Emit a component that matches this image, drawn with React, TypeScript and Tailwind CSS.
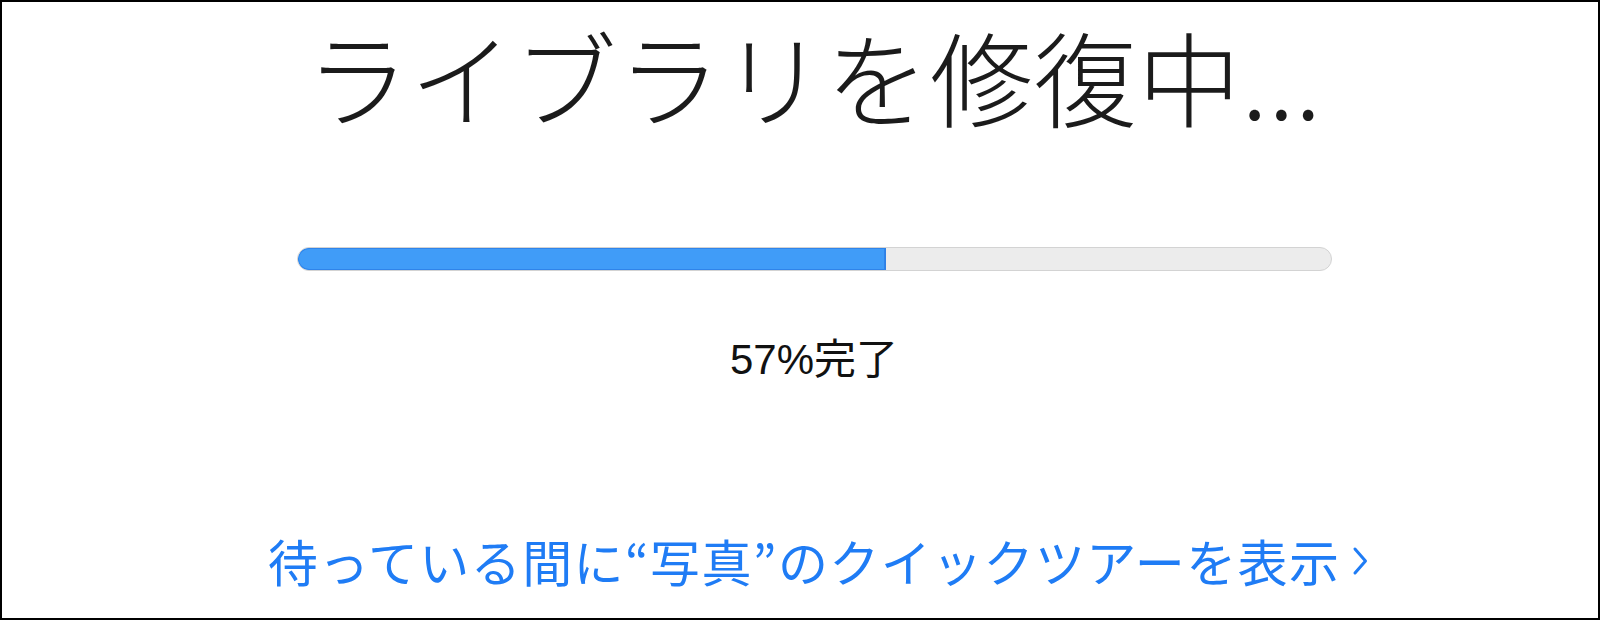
import React from 'react';

const jp = { fontFamily: '"Noto Sans CJK JP", "Noto Sans", sans-serif' };

function ProgressBar({ percent }: { percent: number }) {
  return (
    <div className="h-[24px] w-[1035px] overflow-hidden rounded-full border border-[#d3d3d3] bg-[#ececec]">
      <div
        className="h-full rounded-l-full border-r border-[#2f80e4] bg-[#409cf8] shadow-[inset_0_0_0_1px_#2f84ea]"
        style={{ width: `${percent}%` }}
      />
    </div>
  );
}

export default function App() {
  const percent = 57;

  return (
    <div className="box-border flex h-[620px] w-[1600px] flex-col items-center border-2 border-black bg-white pl-[28px]" style={jp}>
      {/* Title */}
      <h1 className="mt-[22px] text-[103px] font-light leading-none tracking-[1px] text-[#1b1b1b]">
        ライブラリを修復中...
      </h1>

      {/* Progress */}
      <div className="mt-[120px]">
        <ProgressBar percent={percent} />
      </div>

      <p
        className="mt-[68px] text-[42px] leading-none text-[#111]"
        style={{ fontFamily: '"Liberation Sans", "Noto Sans CJK JP", sans-serif' }}
      >
        {percent}%完了
      </p>

      {/* Tour link */}
      <a className="ml-[8px] mt-[154px] flex items-center text-[50px] leading-none tracking-[1.4px] text-[#1f7cf5]">
        <span>待っている間に“写真”のクイックツアーを表示</span>
        <svg className="ml-[12px] mt-[2px]" width="16" height="30" viewBox="0 0 16 30" fill="none">
          <path d="M3 3 L13.5 15 L3 27" stroke="#1f7cf5" strokeWidth="3" strokeLinecap="round" strokeLinejoin="round" />
        </svg>
      </a>
    </div>
  );
}
